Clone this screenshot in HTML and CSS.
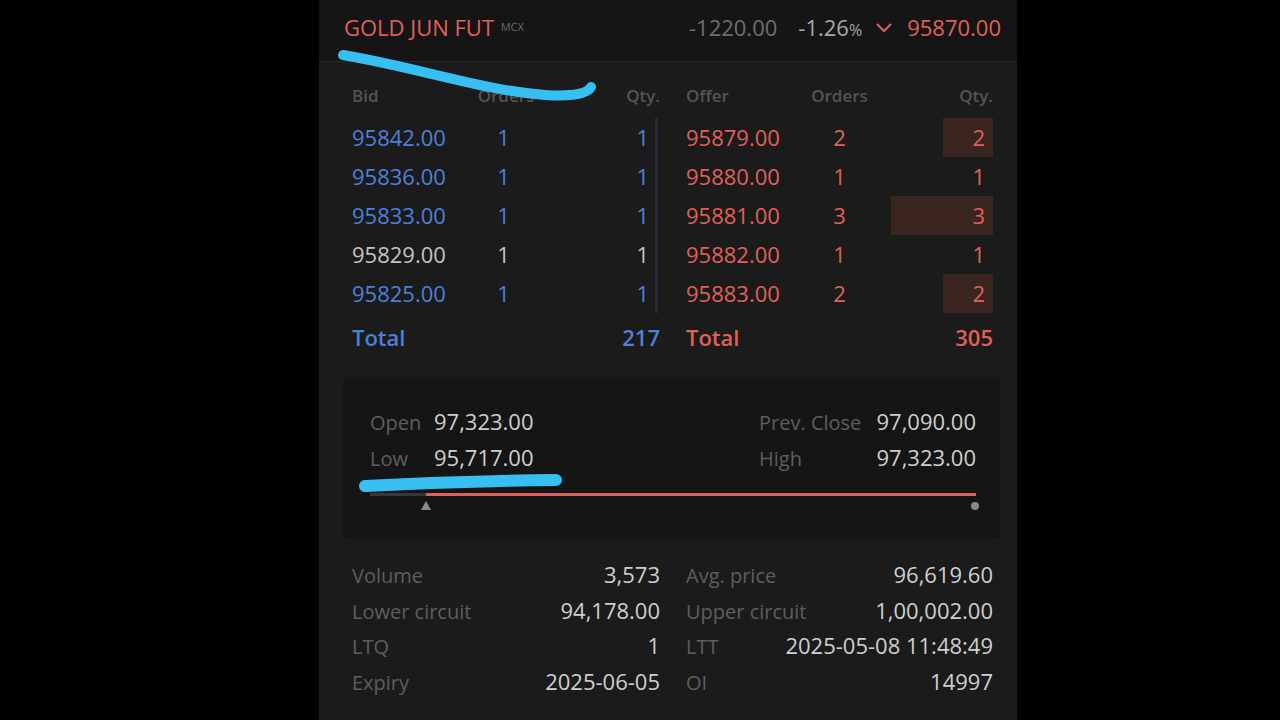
FILE: index.html
```html
<!DOCTYPE html>
<html lang="en">
<head>
    <meta charset="UTF-8">
    <meta name="viewport" content="width=device-width, initial-scale=1.0">
    <title>GOLD JUN FUT - Market Depth</title>
    <link rel="stylesheet" href="styles.css">
</head>
<body>
    <div class="panel">
        <div class="quote-head">
            <div class="name">GOLD JUN FUT <span class="exch">MCX</span></div>
            <div class="ticks">
                <span class="chg">-1220.00</span>
                <span class="pct">-1.26<small>%</small></span>
                <svg class="chev" width="18" height="12" viewBox="0 0 18 12"><path d="M2 3 L9 10 L16 3" fill="none" stroke="#e0605a" stroke-width="2"/></svg>
                <span class="ltp">95870.00</span>
            </div>
        </div>

        <div class="depth">
            <div class="side bids">
                <div class="row head"><span>Bid</span><span>Orders</span><span>Qty.</span></div>
                <div class="levels">
                    <div class="row"><span>95842.00</span><span>1</span><span class="qty">1</span></div>
                    <div class="row"><span>95836.00</span><span>1</span><span class="qty">1</span></div>
                    <div class="row"><span>95833.00</span><span>1</span><span class="qty">1</span></div>
                    <div class="row plain"><span>95829.00</span><span>1</span><span class="qty">1</span></div>
                    <div class="row"><span>95825.00</span><span>1</span><span class="qty">1</span></div>
                </div>
                <div class="row total"><span>Total</span><span></span><span>217</span></div>
            </div>

            <div class="side offers">
                <div class="row head"><span>Offer</span><span>Orders</span><span>Qty.</span></div>
                <div class="levels">
                    <div class="row"><span>95879.00</span><span>2</span><span class="qty"><i class="bar" style="width: 50px"></i><b>2</b></span></div>
                    <div class="row"><span>95880.00</span><span>1</span><span class="qty"><b>1</b></span></div>
                    <div class="row"><span>95881.00</span><span>3</span><span class="qty"><i class="bar" style="width: 102px"></i><b>3</b></span></div>
                    <div class="row"><span>95882.00</span><span>1</span><span class="qty"><b>1</b></span></div>
                    <div class="row"><span>95883.00</span><span>2</span><span class="qty"><i class="bar" style="width: 50px"></i><b>2</b></span></div>
                </div>
                <div class="row total"><span>Total</span><span></span><span>305</span></div>
            </div>
        </div>

        <div class="ohlc">
            <div class="ohlc-grid">
                <div class="pair"><span class="lbl">Open</span><span class="val">97,323.00</span></div>
                <div class="pair wide"><span class="lbl">Prev. Close</span><span class="val">97,090.00</span></div>
                <div class="pair"><span class="lbl">Low</span><span class="val">95,717.00</span></div>
                <div class="pair wide"><span class="lbl">High</span><span class="val">97,323.00</span></div>
            </div>
            <div class="range">
                <span class="range-low"></span>
                <span class="range-hit"></span>
                <span class="pin-tri"></span>
                <span class="pin-dot"></span>
            </div>
        </div>

        <div class="stats">
            <div class="stat"><span class="lbl">Volume</span><span class="val">3,573</span></div>
            <div class="stat"><span class="lbl">Avg. price</span><span class="val">96,619.60</span></div>
            <div class="stat"><span class="lbl">Lower circuit</span><span class="val">94,178.00</span></div>
            <div class="stat"><span class="lbl">Upper circuit</span><span class="val">1,00,002.00</span></div>
            <div class="stat"><span class="lbl">LTQ</span><span class="val">1</span></div>
            <div class="stat"><span class="lbl">LTT</span><span class="val">2025-05-08 11:48:49</span></div>
            <div class="stat"><span class="lbl">Expiry</span><span class="val">2025-06-05</span></div>
            <div class="stat"><span class="lbl">OI</span><span class="val">14997</span></div>
        </div>
    </div>

    <!-- hand-drawn highlight marks -->
    <svg class="marks" width="1280" height="720" viewBox="0 0 1280 720">
        <path d="M343 55 C 420 68, 480 90, 545 95 C 575 97, 588 93, 591 87" fill="none" stroke="#36bff0" stroke-width="10" stroke-linecap="round"/>
        <path d="M365 486 Q 460 481 556 480" fill="none" stroke="#36bff0" stroke-width="12" stroke-linecap="round"/>
    </svg>
</body>
</html>
```

FILE: styles.css
```css
body {
    margin: 0;
    background: #000;
    font-family: "Open Sans", "Noto Sans", sans-serif;
    color: #cdcdcd;
    position: relative;
    height: 720px;
    overflow: hidden;
}

.panel {
    width: 698px;
    height: 720px;
    margin-left: 319px;
    background: #1b1b1b;
}

/* Quote header */
.quote-head {
    height: 54px;
    padding: 0 16px 7px 25px;
    display: flex;
    align-items: center;
    justify-content: space-between;
    background: #151515;
    border-bottom: 1px solid #262626;
}
.name {
    font-size: 22px;
    color: #e0605b;
}
.exch {
    font-size: 11px;
    color: #6a6a6a;
    vertical-align: 5px;
    margin-left: 1px;
}
.ticks {
    display: flex;
    align-items: center;
    font-size: 22px;
}
.chg {
    color: #6e6e6e;
    margin-right: 21px;
}
.pct {
    color: #a8a8a8;
    margin-right: 13px;
}
.pct small {
    font-size: 16px;
}
.chev {
    margin-right: 14px;
}
.ltp {
    color: #e0605a;
}

/* Market depth */
.depth {
    display: grid;
    grid-template-columns: 308px 307px;
    column-gap: 26px;
    padding: 18px 24px 0 33px;
}
.row {
    display: grid;
    grid-template-columns: 1fr 1fr 1fr;
    height: 39px;
    line-height: 39px;
    font-size: 22px;
}
.row span:nth-child(2) {
    text-align: center;
}
.row span:nth-child(3) {
    text-align: right;
}
.row.head {
    height: 32px;
    line-height: 32px;
    margin-bottom: 6px;
    font-size: 17px;
    font-weight: 600;
    color: #545454;
}
.row.total {
    height: 38px;
    line-height: 38px;
    margin-top: 5px;
    font-weight: 600;
}

.bids {
    color: #4d80db;
}
.bids .levels {
    border-right: 3px solid #252b38;
    margin-right: 2px;
}
.bids .qty {
    padding-right: 6px;
}
.bids .row.plain {
    color: #c4c4c4;
}

.offers {
    color: #e0605a;
}
.offers .qty {
    position: relative;
    padding-right: 8px;
}
.offers .qty b {
    position: relative;
    font-weight: 400;
}
.bar {
    position: absolute;
    right: 0;
    top: 0;
    bottom: 0;
    background: #3a2521;
}

/* Open / high / low box */
.ohlc {
    height: 160px;
    box-sizing: border-box;
    margin: 23px 17px 0 24px;
    padding: 24px 24px 0 27px;
    background: #151516;
    border-radius: 4px;
}
.ohlc-grid {
    display: grid;
    grid-template-columns: 1fr 217px;
}
.pair {
    display: flex;
    align-items: baseline;
    height: 36px;
    line-height: 36px;
}
.pair .lbl {
    width: 64px;
}
.pair.wide {
    justify-content: space-between;
}
.pair.wide .lbl {
    width: auto;
}
.lbl {
    font-size: 20px;
    color: #5e5e5e;
}
.val {
    font-size: 22px;
    color: #cfcfcf;
}

.range {
    position: relative;
    display: flex;
    height: 3px;
    margin-top: 18px;
}
.range-low {
    width: 56px;
    background: #383838;
}
.range-hit {
    flex: 1;
    background: #e0605a;
}
.pin-tri {
    position: absolute;
    left: 51px;
    top: 8px;
    border-left: 5px solid transparent;
    border-right: 5px solid transparent;
    border-bottom: 9px solid #8a8a8a;
}
.pin-dot {
    position: absolute;
    right: -3px;
    top: 9px;
    width: 8px;
    height: 8px;
    border-radius: 50%;
    background: #8a8a8a;
}

/* Bottom stats */
.stats {
    display: grid;
    grid-template-columns: 308px 307px;
    column-gap: 26px;
    padding: 0 24px 0 33px;
    margin-top: 18px;
}
.stat {
    display: flex;
    justify-content: space-between;
    align-items: baseline;
    height: 35.5px;
    line-height: 35.5px;
}

.marks {
    position: absolute;
    left: 0;
    top: 0;
    pointer-events: none;
}
```
